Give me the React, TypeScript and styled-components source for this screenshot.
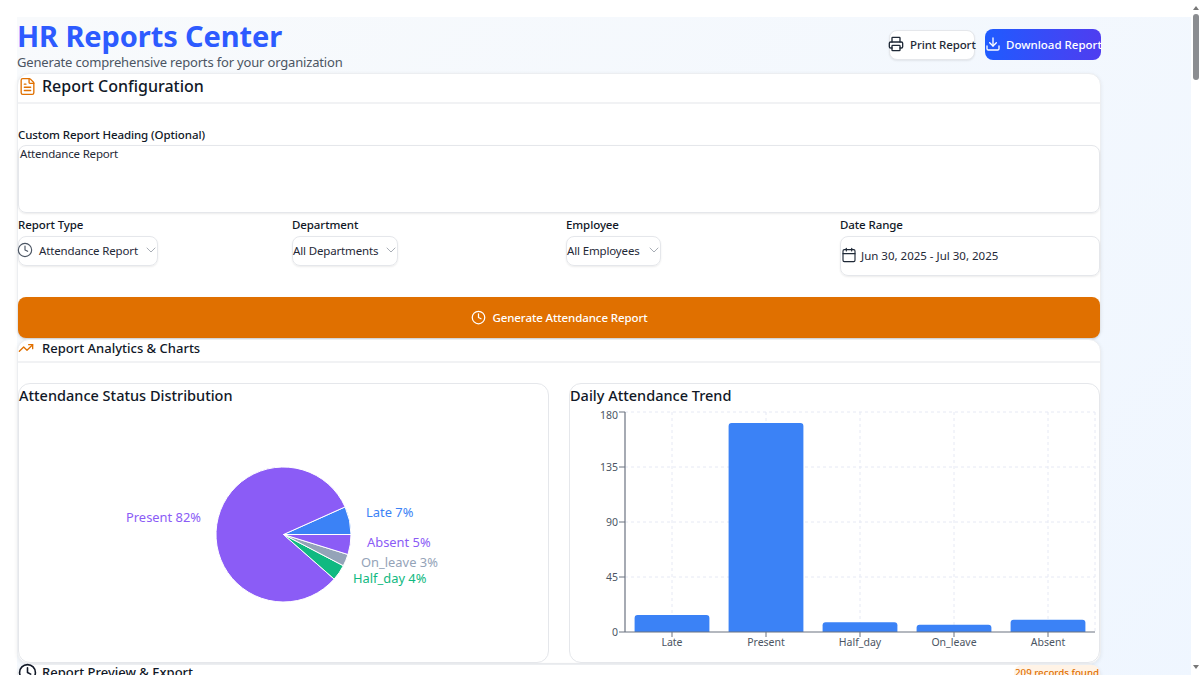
import React from 'react';
import styled, { createGlobalStyle } from 'styled-components';
import { Calendar, ChevronDown, Clock, Download, FileText, Printer, TrendingUp } from 'lucide-react';

const GlobalStyle = createGlobalStyle`
  html, body { margin: 0; padding: 0; height: 675px; overflow: hidden; background: #fff; }
  body { font-family: "Noto Sans", "Open Sans", sans-serif; color: #111827; }
  * { box-sizing: border-box; }
  svg { flex: none; }
`;

const Shell = styled.div`
  display: flex;
  width: 1200px;
  height: 675px;
  overflow: hidden;
  padding: 17px 0 0 17px;
`;

const Backdrop = styled.main`
  width: 1174px;
  height: 700px;
  flex: none;
  background: linear-gradient(135deg, #f8fafc 0%, #eff6ff 100%);
`;

const Content = styled.div`
  width: 1084px;
`;

const Scrollbar = styled.div`
  position: fixed;
  top: 0;
  right: 0;
  bottom: 0;
  width: 9px;
  background: #fff;
`;

const Thumb = styled.div`
  position: absolute;
  top: 14px;
  left: 2px;
  width: 6px;
  height: 66px;
  border-radius: 3px;
  background: #8b8d91;
`;

const Arrow = styled.div<{ $down?: boolean }>`
  position: absolute;
  left: 2px;
  ${p => (p.$down ? 'bottom: 6px;' : 'top: 6px;')}
  border-left: 3px solid transparent;
  border-right: 3px solid transparent;
  ${p => (p.$down ? 'border-top: 4px solid #777;' : 'border-bottom: 4px solid #777;')}
`;

const Header = styled.header`
  display: flex;
  justify-content: space-between;
  height: 56px;
`;

const Title = styled.h1`
  margin: 0;
  font-size: 29px;
  line-height: 38px;
  font-weight: 700;
  letter-spacing: -0.1px;
  color: #2d5bff;
`;

const Subtitle = styled.p`
  margin: 0;
  font-size: 13px;
  line-height: 15px;
  letter-spacing: -0.17px;
  color: #4b5563;
`;

const Actions = styled.div`
  display: flex;
  align-items: flex-start;
  gap: 10px;
  padding-top: 12px;
`;

const PrintButton = styled.button`
  display: flex;
  align-items: center;
  gap: 6px;
  width: 86px;
  height: 30px;
  margin-top: 1px;
  padding: 0 0 2px;
  font: 500 11.5px "Noto Sans", sans-serif;
  letter-spacing: -0.1px;
  white-space: nowrap;
  color: #1f2937;
  background: #fff;
  border: 1px solid #e5e7eb;
  border-radius: 8px;
  box-shadow: 0 1px 2px rgba(0, 0, 0, 0.08);

  svg { margin-left: -2px; }
`;

const DownloadButton = styled.button`
  display: flex;
  align-items: center;
  gap: 5px;
  width: 116px;
  height: 31px;
  padding: 0 0 1px;
  font: 500 11.5px "Noto Sans", sans-serif;
  white-space: nowrap;
  color: #fff;
  background: linear-gradient(90deg, #1f5bff, #4f3df0);
  border: 0;
  border-radius: 8px;
`;

const Card = styled.section<{ $height: number }>`
  height: ${p => p.$height}px;
  background: #fff;
  border: 1px solid #eceef1;
  border-radius: 12px;
  box-shadow: 0 1px 4px rgba(0, 0, 0, 0.07);
`;

const CardHead = styled.div<{ $height: number; $size: number; $lift: number }>`
  display: flex;
  align-items: center;
  justify-content: space-between;
  height: ${p => p.$height}px;
  padding-bottom: ${p => p.$lift}px;
  font-size: ${p => p.$size}px;
  font-weight: 500;
  border-bottom: 2px solid #f1f2f4;
`;

const HeadTitle = styled.div<{ $gap: number }>`
  display: flex;
  align-items: center;
  gap: ${p => p.$gap}px;
  color: #111827;
`;

const ConfigBody = styled.div`
  padding: 23px 0 0;
`;

const FieldLabel = styled.label`
  display: block;
  font-size: 11.5px;
  line-height: 16px;
  font-weight: 500;
  letter-spacing: -0.09px;
  color: #111827;
`;

const HeadingInput = styled.div`
  height: 68px;
  margin-top: 2px;
  padding: 0 1px;
  font-size: 11.5px;
  line-height: 16px;
  letter-spacing: -0.2px;
  color: #1f2937;
  border: 1px solid #e5e7eb;
  border-radius: 8px;
  box-shadow: 0 1px 2px rgba(0, 0, 0, 0.08);
`;

const FieldGrid = styled.div`
  display: grid;
  grid-template-columns: repeat(3, 258px) 260px;
  column-gap: 16px;
  margin-top: 4px;
  height: 80px;
`;

const SelectBox = styled.div<{ $width: number }>`
  display: flex;
  align-items: center;
  width: ${p => p.$width}px;
  height: 30px;
  margin-top: 3px;
  padding: 0 0 2px;
  font-size: 11.5px;
  letter-spacing: -0.15px;
  white-space: nowrap;
  color: #1f2937;
  border: 1px solid #e5e7eb;
  border-radius: 8px;
  box-shadow: 0 1px 2px rgba(0, 0, 0, 0.08);

  svg.lead { margin: 0 6px 0 -2px; color: #4b5563; }
  svg.chev { margin-left: auto; margin-right: -2px; color: #a8adb5; }
`;

const DateBox = styled.div`
  display: flex;
  align-items: center;
  gap: 4px;
  height: 40px;
  margin-top: 3px;
  padding-bottom: 2px;
  font-size: 11.5px;
  color: #1f2937;
  border: 1px solid #e5e7eb;
  border-radius: 8px;
  box-shadow: 0 1px 2px rgba(0, 0, 0, 0.08);
`;

const GenerateButton = styled.button`
  display: flex;
  align-items: center;
  justify-content: center;
  gap: 7px;
  width: 1082px;
  height: 41px;
  font: 500 11.5px "Noto Sans", sans-serif;
  letter-spacing: -0.1px;
  color: #fff;
  background: #e07000;
  border: 0;
  border-radius: 8px;
  box-shadow: 0 1px 2px rgba(0, 0, 0, 0.12);
`;

const ChartGrid = styled.div`
  display: grid;
  grid-template-columns: 531px 531px;
  column-gap: 20px;
  margin-top: 20px;
`;

const ChartCard = styled.div`
  height: 280px;
  background: #fff;
  border: 1px solid #e5e7eb;
  border-radius: 12px;
`;

const ChartTitle = styled.h3`
  margin: 0;
  height: 28px;
  font-size: 14.5px;
  line-height: 22px;
  font-weight: 500;
  color: #111827;
`;

const ChartSvg = styled.svg`
  display: block;
  overflow: visible;
  font-family: "Noto Sans", sans-serif;
`;

const RecordsBadge = styled.span`
  align-self: flex-start;
  padding: 0 1px;
  font-size: 9.7px;
  line-height: 15px;
  color: #e07000;
  background: #fff3e6;
  border-radius: 8px 8px 0 0;
`;

interface Slice {
  name: string;
  count: number;
  color: string;
}

const slices: Slice[] = [
  { name: 'Late', count: 14, color: '#3b82f6' },
  { name: 'Present', count: 171, color: '#8b5cf6' },
  { name: 'Half_day', count: 8, color: '#10b981' },
  { name: 'On_leave', count: 6, color: '#94a3b8' },
  { name: 'Absent', count: 10, color: '#8b5cf6' }
];

const pieLabels = [
  { text: 'Late 7%', x: 347, y: 105, color: '#3b82f6' },
  { text: 'Present 82%', x: 107, y: 110, color: '#8b5cf6' },
  { text: 'Half_day 4%', x: 334, y: 171, color: '#10b981' },
  { text: 'On_leave 3%', x: 342, y: 155, color: '#94a3b8' },
  { text: 'Absent 5%', x: 348, y: 135, color: '#8b5cf6' }
];

const piePaths = () => {
  const cx = 264.5;
  const cy = 122.5;
  const r = 67.5;
  const total = slices.reduce((sum, s) => sum + s.count, 0);
  let angle = 0;
  return slices.map(s => {
    const sweep = (s.count / total) * Math.PI * 2;
    const x1 = cx + r * Math.cos(angle);
    const y1 = cy - r * Math.sin(angle);
    const x2 = cx + r * Math.cos(angle + sweep);
    const y2 = cy - r * Math.sin(angle + sweep);
    const large = sweep > Math.PI ? 1 : 0;
    angle += sweep;
    return { color: s.color, d: `M${cx} ${cy}L${x1} ${y1}A${r} ${r} 0 ${large} 0 ${x2} ${y2}Z` };
  });
};

const PieChart = () => (
  <ChartSvg width={529} height={250} viewBox="0 0 529 250">
    {piePaths().map((p, i) => (
      <path key={i} d={p.d} fill={p.color} stroke="#fff" strokeWidth={1} />
    ))}
    {pieLabels.map(l => (
      <text key={l.text} x={l.x} y={l.y} fontSize={12.9} fill={l.color}>{l.text}</text>
    ))}
  </ChartSvg>
);

// plot area in svg coordinates
const left = 55;
const right = 525;
const top = 0;
const bottom = 220;
const band = (right - left) / slices.length;
const yTicks = [0, 45, 90, 135, 180];

const BarChart = () => (
  <ChartSvg width={529} height={250} viewBox="0 0 529 250">
    {yTicks.slice(1).map(t => {
      const y = bottom - (t / 180) * (bottom - top);
      return <line key={t} x1={left} x2={right} y1={y} y2={y} stroke="#e6e9f4" strokeDasharray="3 3" />;
    })}
    {slices.map((s, i) => {
      const x = left + band * (i + 0.5);
      return <line key={s.name} x1={x} x2={x} y1={top} y2={bottom} stroke="#e6e9f4" strokeDasharray="3 3" />;
    })}
    <line x1={right} x2={right} y1={top} y2={bottom} stroke="#e6e9f4" strokeDasharray="3 3" />
    {slices.map((s, i) => {
      const h = (s.count / 180) * (bottom - top);
      const x = left + band * (i + 0.5) - 37.4;
      return (
        <path
          key={s.name}
          d={`M${x} ${bottom}V${bottom - h + 3}Q${x} ${bottom - h} ${x + 3} ${bottom - h}H${x + 71.8}Q${x + 74.8} ${bottom - h} ${x + 74.8} ${bottom - h + 3}V${bottom}Z`}
          fill="#3b82f6"
        />
      );
    })}
    <line x1={left} x2={left} y1={top} y2={bottom} stroke="#6b7280" strokeWidth={1.2} />
    <line x1={left} x2={right} y1={bottom} y2={bottom} stroke="#6b7280" strokeWidth={1.2} />
    {yTicks.map(t => {
      const y = bottom - (t / 180) * (bottom - top);
      return (
        <g key={t}>
          <line x1={left - 6} x2={left} y1={y} y2={y} stroke="#6b7280" />
          <text x={left - 7} y={y + (t === 180 ? 7 : 4)} fontSize={10.5} textAnchor="end" fill="#4b5563">{t}</text>
        </g>
      );
    })}
    {slices.map((s, i) => {
      const x = left + band * (i + 0.5);
      return (
        <g key={s.name}>
          <line x1={x} x2={x} y1={bottom} y2={bottom + 5} stroke="#6b7280" />
          <text x={x} y={bottom + 14} fontSize={10.5} textAnchor="middle" fill="#4b5563">{s.name}</text>
        </g>
      );
    })}
  </ChartSvg>
);

export default function App() {
  return (
    <>
      <GlobalStyle />
      <Shell>
        <Backdrop>
          <Content>
            <Header>
              <div>
                <Title>HR Reports Center</Title>
                <Subtitle>Generate comprehensive reports for your organization</Subtitle>
              </div>
              <Actions>
                <PrintButton><Printer size={16} />Print Report</PrintButton>
                <DownloadButton><Download size={16} />Download Report</DownloadButton>
              </Actions>
            </Header>

            <Card $height={266}>
              <CardHead $height={30} $size={16} $lift={4}>
                <HeadTitle $gap={5}><FileText size={19} strokeWidth={1.7} color="#e07000" />Report Configuration</HeadTitle>
              </CardHead>
              <ConfigBody>
                <FieldLabel>Custom Report Heading (Optional)</FieldLabel>
                <HeadingInput>Attendance Report</HeadingInput>
                <FieldGrid>
                  <div>
                    <FieldLabel>Report Type</FieldLabel>
                    <SelectBox $width={140}>
                      <Clock className="lead" size={16} strokeWidth={1.7} />Attendance Report
                      <ChevronDown className="chev" size={16} strokeWidth={1.5} />
                    </SelectBox>
                  </div>
                  <div>
                    <FieldLabel>Department</FieldLabel>
                    <SelectBox $width={106}>
                      All Departments<ChevronDown className="chev" size={16} strokeWidth={1.5} />
                    </SelectBox>
                  </div>
                  <div>
                    <FieldLabel>Employee</FieldLabel>
                    <SelectBox $width={95}>
                      All Employees<ChevronDown className="chev" size={16} strokeWidth={1.5} />
                    </SelectBox>
                  </div>
                  <div>
                    <FieldLabel>Date Range</FieldLabel>
                    <DateBox><Calendar size={16} strokeWidth={1.7} />Jun 30, 2025 - Jul 30, 2025</DateBox>
                  </div>
                </FieldGrid>
                <GenerateButton><Clock size={15} />Generate Attendance Report</GenerateButton>
              </ConfigBody>
            </Card>

            <Card $height={325}>
              <CardHead $height={23} $size={13} $lift={6}>
                <HeadTitle $gap={8}><TrendingUp size={16} color="#e07000" />Report Analytics &amp; Charts</HeadTitle>
              </CardHead>
              <ChartGrid>
                <ChartCard>
                  <ChartTitle>Attendance Status Distribution</ChartTitle>
                  <PieChart />
                </ChartCard>
                <ChartCard>
                  <ChartTitle>Daily Attendance Trend</ChartTitle>
                  <BarChart />
                </ChartCard>
              </ChartGrid>
            </Card>

            <Card $height={60}>
              <CardHead $height={16} $size={13} $lift={0}>
                <HeadTitle $gap={5}><Clock size={19} color="#111827" />Report Preview &amp; Export</HeadTitle>
                <RecordsBadge>209 records found</RecordsBadge>
              </CardHead>
            </Card>
          </Content>
        </Backdrop>
        <Scrollbar>
          <Arrow />
          <Thumb />
          <Arrow $down />
        </Scrollbar>
      </Shell>
    </>
  );
}
